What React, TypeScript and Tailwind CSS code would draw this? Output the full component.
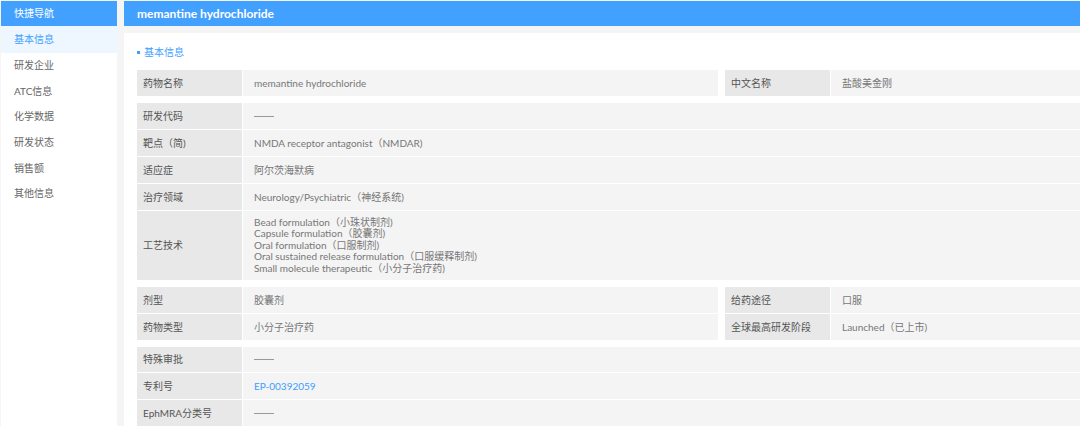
import React from "react";

const font = { fontFamily: 'Lato, "Noto Sans CJK SC", sans-serif' };

const Dash = () => <span className="inline-block w-[20px] h-px bg-[#999] align-middle" />;

function Cell({ label, children, h = "h-[26px]" }: { label: string; children: React.ReactNode; h?: string }) {
  return (
    <div className={`flex ${h}`}>
      <div className="w-[105px] shrink-0 bg-[#e8e8e8] flex items-center pl-[6px] text-[#555]">{label}</div>
      <div className="w-px shrink-0 bg-white" />
      <div className="flex-1 bg-[#f4f4f4] flex items-center pl-[11px] text-[#777] min-w-0">{children}</div>
    </div>
  );
}

function Pair({ l1, v1, l2, v2 }: { l1: string; v1: React.ReactNode; l2: string; v2: React.ReactNode }) {
  return (
    <div className="flex">
      <div className="w-[581px] shrink-0">
        <Cell label={l1}>{v1}</Cell>
      </div>
      <div className="w-[7px] shrink-0" />
      <div className="flex-1">
        <Cell label={l2}>{v2}</Cell>
      </div>
    </div>
  );
}

const Sep = () => <div className="h-px bg-white" />;

export default function App() {
  const nav = ["研发企业", "ATC信息", "化学数据", "研发状态", "销售额", "其他信息"];
  return (
    <div className="w-[1080px] h-[426px] overflow-hidden bg-[#f5f5f5] flex pt-px pl-px text-[10px]" style={font}>
      <div className="w-[116px] shrink-0 bg-white flex flex-col">
        <div className="h-[25px] shrink-0 bg-[#42a0ff] text-white flex items-center pl-[13px]">快捷导航</div>
        <div className="h-[27px] shrink-0 bg-[#eef6ff] text-[#409eff] flex items-center pl-[13px]">基本信息</div>
        {nav.map((n) => (
          <div key={n} className="h-[25.6px] shrink-0 text-[#666] flex items-center pl-[13px]">{n}</div>
        ))}
      </div>
      <div className="w-[7px] shrink-0" />
      <div className="flex-1 flex flex-col min-w-0">
        <div className="h-[25px] shrink-0 bg-[#42a0ff] text-white font-bold text-[12px] flex items-center pl-[13px]">
          memantine hydrochloride
        </div>
        <div className="h-[7px] shrink-0" />
        <div className="flex-1 bg-white pl-[13px] pt-[12px]">
          <div className="flex items-center h-[14px] text-[#409eff]">
            <span className="w-[3px] h-[3px] bg-[#409eff] mr-[4px]" />
            基本信息
          </div>
          <div className="h-[11px]" />
          <Pair l1="药物名称" v1="memantine hydrochloride" l2="中文名称" v2="盐酸美金刚" />
          <div className="h-[7px]" />
          <Cell label="研发代码"><Dash /></Cell>
          <Sep />
          <Cell label="靶点（简)">NMDA receptor antagonist（NMDAR)</Cell>
          <Sep />
          <Cell label="适应症">阿尔茨海默病</Cell>
          <Sep />
          <Cell label="治疗领域">Neurology/Psychiatric（神经系统)</Cell>
          <Sep />
          <Cell label="工艺技术" h="h-[69px]">
            <div className="leading-[11.6px]">
              <div>Bead formulation（小珠状制剂)</div>
              <div>Capsule formulation（胶囊剂)</div>
              <div>Oral formulation（口服制剂)</div>
              <div>Oral sustained release formulation（口服缓释制剂)</div>
              <div>Small molecule therapeutic（小分子治疗药)</div>
            </div>
          </Cell>
          <div className="h-[7px]" />
          <Pair l1="剂型" v1="胶囊剂" l2="给药途径" v2="口服" />
          <Sep />
          <Pair l1="药物类型" v1="小分子治疗药" l2="全球最高研发阶段" v2="Launched（已上市)" />
          <div className="h-[7px]" />
          <Cell label="特殊审批" h="h-[25px]"><Dash /></Cell>
          <Sep />
          <Cell label="专利号"><span className="text-[#409eff]">EP-00392059</span></Cell>
          <Sep />
          <Cell label="EphMRA分类号"><Dash /></Cell>
        </div>
      </div>
    </div>
  );
}
